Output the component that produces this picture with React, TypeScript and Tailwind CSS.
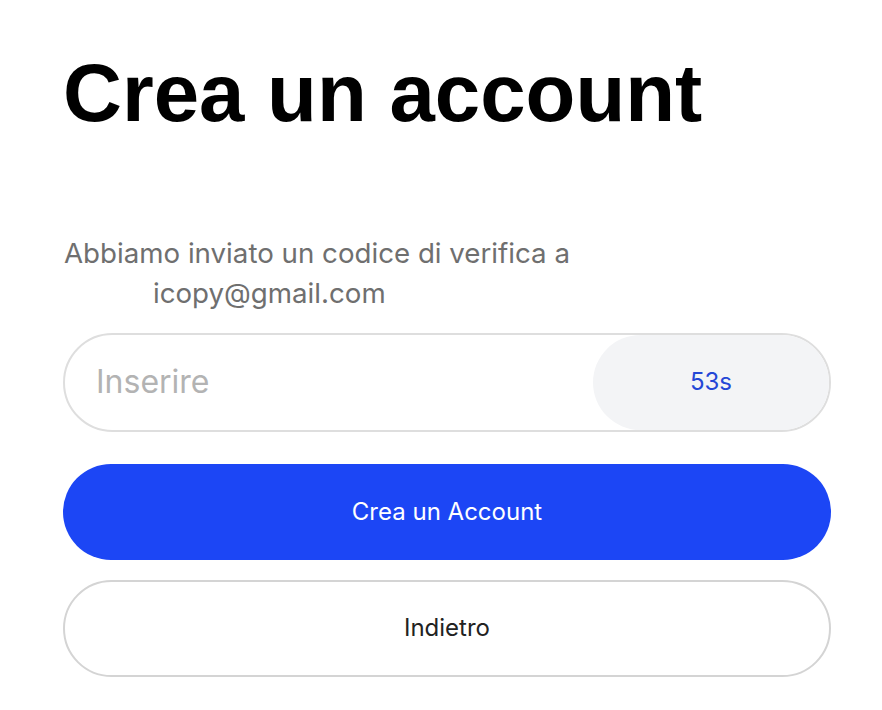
import React from "react";

export default function App() {
  return (
    <div className="min-h-screen bg-white px-[63px] pt-[52px] font-['Inter','Noto_Sans',sans-serif]">
      <h1 className="font-['Liberation_Sans',Arial,sans-serif] text-[81.6px] font-bold leading-none text-black">
        Crea un account
      </h1>
      <div className="mt-[99px] text-[27.7px] leading-[40px] text-[#6f6f6f]">
        <p className="pl-[1px]">Abbiamo inviato un codice di verifica a</p>
        <p className="pl-[90px]">icopy@gmail.com</p>
      </div>
      <div className="mt-[20px] flex h-[99px] w-[768px] items-center rounded-full border-2 border-[#dedede] bg-white pl-[31px]">
        <span className="flex-1 text-[32px] text-[#b3b3b3]">Inserire</span>
        <div className="flex h-full w-[236px] items-center justify-center rounded-full bg-[#f3f4f6] text-[24px] text-[#2447d6]">
          53s
        </div>
      </div>
      <button className="mt-[32px] flex h-[96px] w-[768px] items-center justify-center rounded-full bg-[#1c46f5] text-[24px] text-white">
        Crea un Account
      </button>
      <button className="mt-[20px] flex h-[97px] w-[768px] items-center justify-center rounded-full border-2 border-[#d4d4d4] bg-white text-[24px] text-[#222222]">
        Indietro
      </button>
    </div>
  );
}
